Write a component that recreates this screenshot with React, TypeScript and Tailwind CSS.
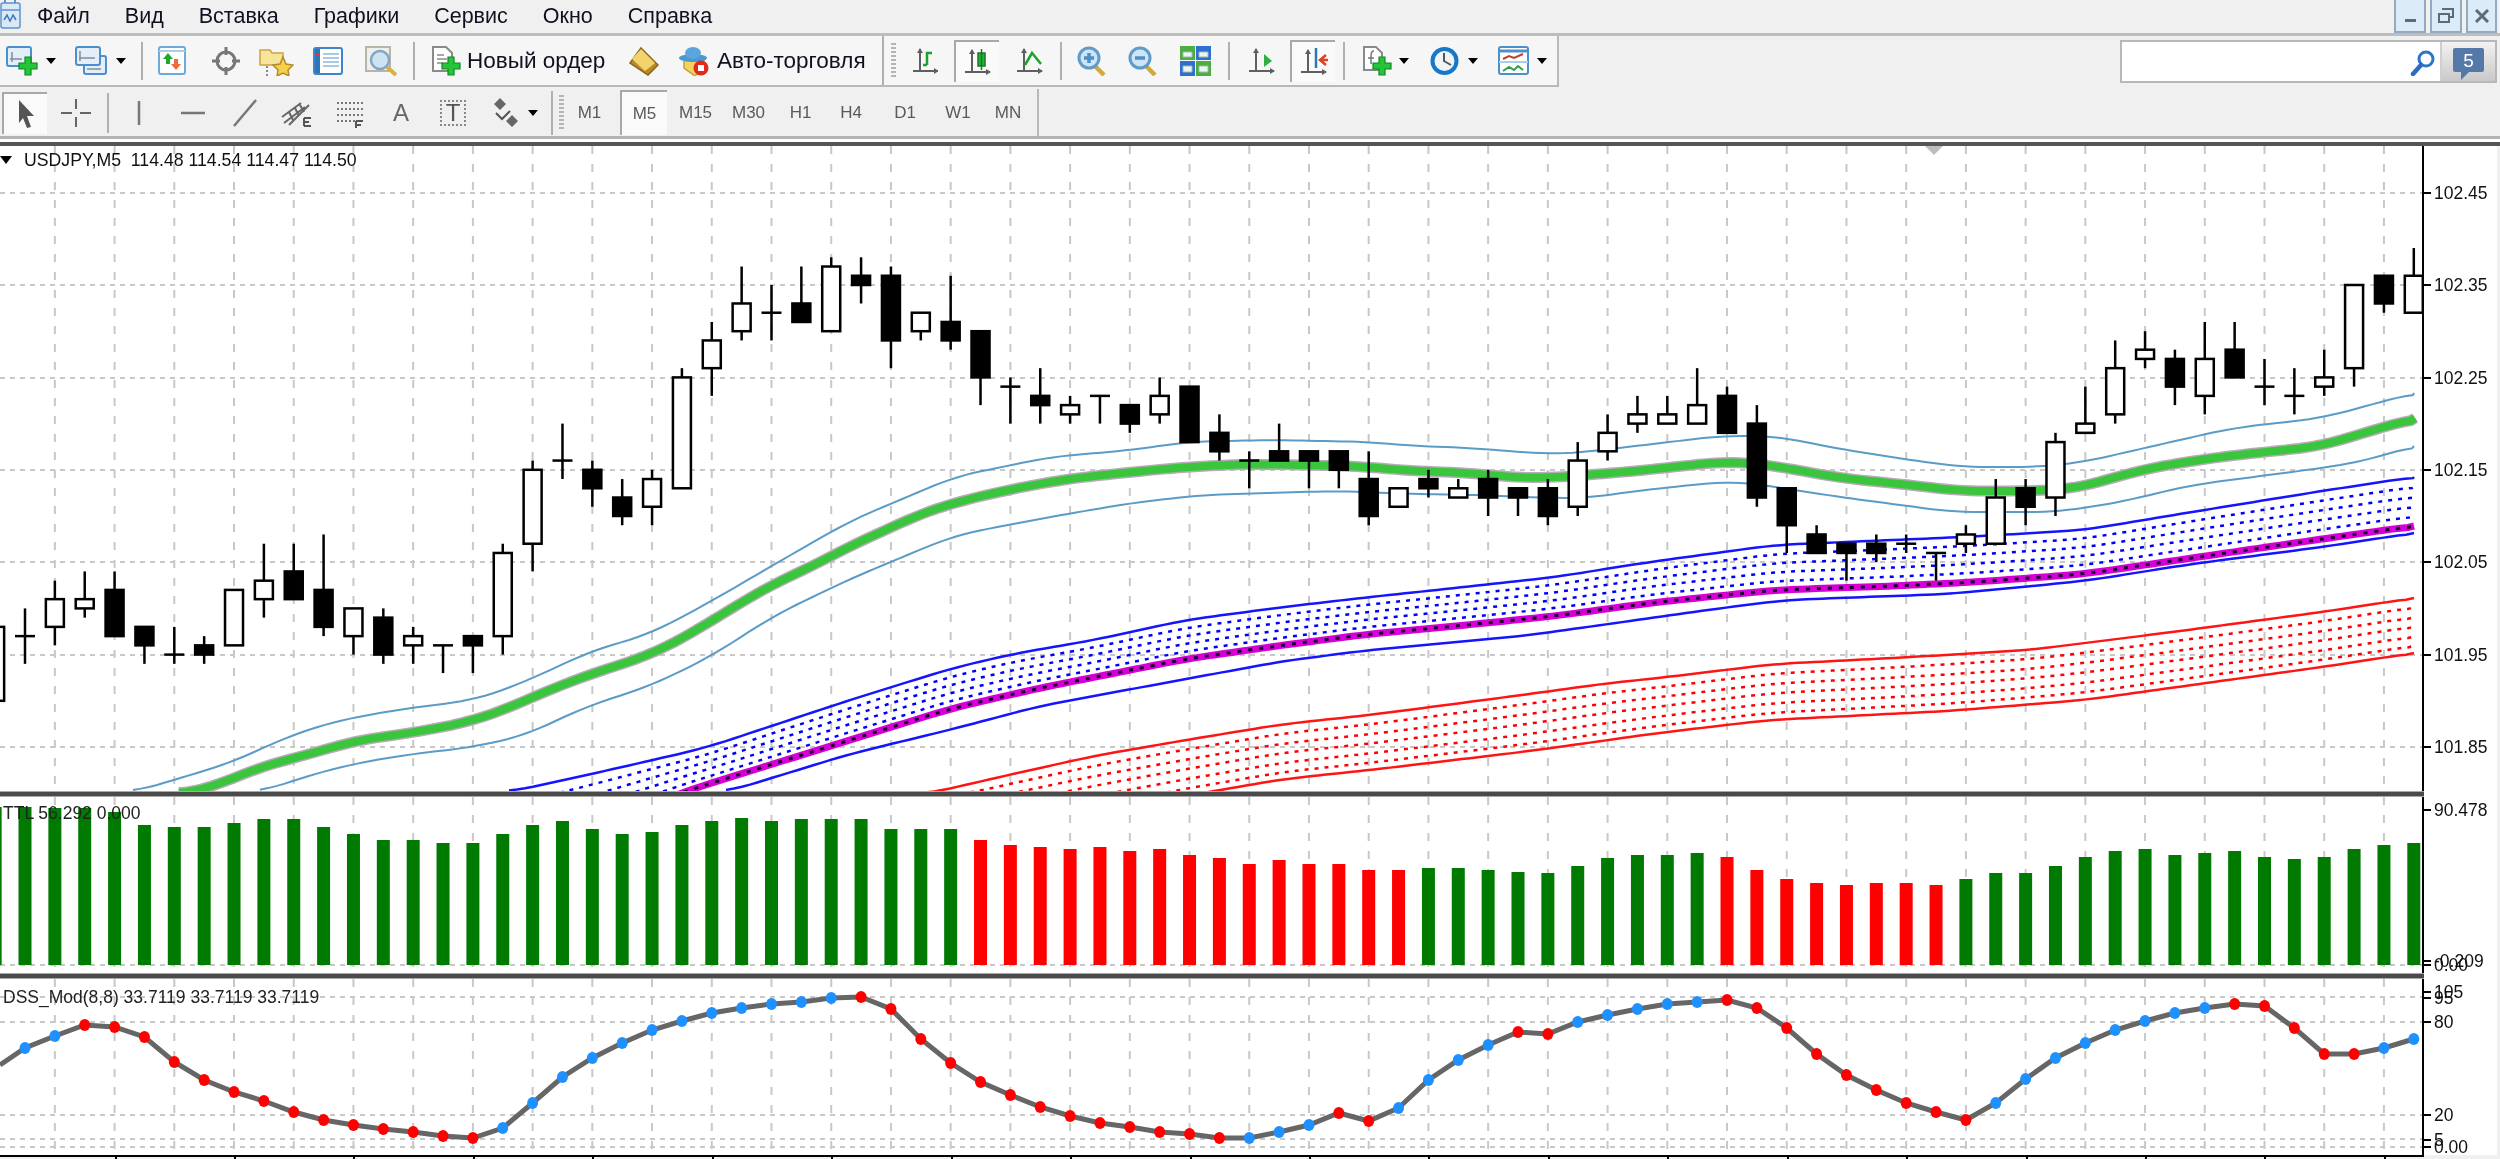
const candles: [number, number, number, number][] = [
  [-10, -2, -2, -10], [-3, -3, 0, -6], [-2, 1, 3, -4], [0, 1, 4, -1], [2, -3, 4, -3], [-2, -4, -2, -6], [-5, -5, -2, -6],
  [-4, -5, -3, -6], [-4, 2, 2, -4], [1, 3, 7, -1], [4, 1, 7, 1], [2, -2, 8, -3], [-3, 0, 0, -5], [-1, -5, 0, -6],
  [-4, -3, -2, -6], [-4, -4, -4, -7], [-3, -4, -3, -7], [-3, 6, 7, -5], [7, 15, 16, 4], [16, 16, 20, 14], [15, 13, 16, 11],
  [12, 10, 14, 9], [11, 14, 15, 9], [13, 25, 26, 13], [26, 29, 31, 23], [30, 33, 37, 29], [32, 32, 35, 29], [33, 31, 37, 31],
  [30, 37, 38, 30], [36, 35, 38, 33], [36, 29, 37, 26], [30, 32, 32, 29], [31, 29, 36, 28], [30, 25, 30, 22], [24, 24, 25, 20],
  [23, 22, 26, 20], [21, 22, 23, 20], [23, 23, 23, 20], [22, 20, 22, 19], [21, 23, 25, 20], [24, 18, 24, 18], [19, 17, 21, 16],
  [16, 16, 17, 13], [17, 16, 20, 16], [17, 16, 17, 13], [17, 15, 17, 13], [14, 10, 17, 9], [11, 13, 13, 11], [14, 13, 15, 12],
  [12, 13, 14, 12], [14, 12, 15, 10], [13, 12, 13, 10], [13, 10, 14, 9], [11, 16, 18, 10], [17, 19, 21, 16], [20, 21, 23, 19],
  [20, 21, 23, 20], [20, 22, 26, 20], [23, 19, 24, 19], [20, 12, 22, 11], [13, 9, 13, 6], [8, 6, 9, 6], [7, 6, 7, 3],
  [7, 6, 8, 5], [7, 7, 8, 6], [6, 6, 6, 3], [7, 8, 9, 6], [7, 12, 14, 7], [13, 11, 14, 9], [12, 18, 19, 10], [19, 20, 24, 19],
  [21, 26, 29, 20], [27, 28, 30, 26], [27, 24, 28, 22], [23, 27, 31, 21], [28, 25, 31, 25], [24, 24, 27, 22], [23, 23, 26, 21],
  [24, 25, 28, 23], [26, 35, 35, 24], [36, 33, 36, 32], [32, 36, 39, 32],
];

// tops of the histogram bars, first one is the cut off bar at the left edge
const barTops = [
  807, 807, 808, 808, 812, 825, 827, 827, 823, 819, 819, 827, 834, 840, 840, 843, 843, 834, 825, 821, 829, 834, 832, 825, 821, 818, 821,
  819, 819, 819, 829, 829, 829, 840, 845, 847, 849, 847, 851, 849, 855, 858, 864, 860, 864, 864, 870, 870, 868, 868, 870, 872, 873, 866,
  858, 855, 855, 853, 857, 870, 879, 883, 885, 883, 883, 885, 879, 873, 873, 866, 857, 851, 849, 855, 853, 851, 857, 859, 857, 849, 845, 843,
];

const dss = [
  1048, 1036, 1025, 1027, 1037, 1062, 1080, 1092, 1101, 1112, 1120, 1125, 1129, 1132, 1136, 1138, 1128, 1103, 1077, 1058, 1043, 1030, 1021,
  1013, 1008, 1004, 1002, 998, 997, 1009, 1039, 1063, 1082, 1095, 1107, 1116, 1123, 1127, 1132, 1134, 1138, 1138, 1132, 1125, 1113, 1121,
  1108, 1080, 1060, 1045, 1032, 1034, 1022, 1015, 1009, 1004, 1002, 1000, 1008, 1028, 1054, 1075, 1090, 1103, 1112, 1120, 1103, 1079, 1058,
  1043, 1030, 1021, 1013, 1008, 1004, 1006, 1028, 1054, 1054, 1048, 1039,
];
const dssRed: [number, number][] = [[2, 15], [28, 40], [44, 45], [50, 51], [57, 65], [74, 78]];

type Pt = [number, number];

const maMid: Pt[] = [
  [179, 794], [211, 788], [249, 771], [293, 758], [325, 750], [352, 741], [390, 736], [434, 729], [472, 721], [504, 710], [542, 693], [585, 676],
  [650, 655], [694, 632], [732, 608], [775, 583], [813, 566], [850, 546], [888, 529], [920, 514], [953, 503], [1007, 490], [1067, 479], [1132, 472],
  [1186, 467], [1251, 464], [1354, 466], [1414, 471], [1473, 473], [1506, 477], [1549, 478], [1587, 475], [1636, 471], [1720, 462], [1742, 462],
  [1775, 466], [1840, 478], [1910, 485], [1959, 491], [2029, 491], [2073, 489], [2149, 468], [2219, 457], [2322, 446], [2360, 434], [2415, 418],
];
const maUp: Pt[] = [
  [133, 792], [184, 777], [233, 762], [282, 739], [325, 724], [352, 718], [396, 710], [434, 705], [474, 700], [509, 688], [542, 674], [591, 651],
  [650, 634], [710, 602], [775, 564], [850, 521], [883, 507], [931, 487], [953, 477], [1007, 466], [1050, 457], [1132, 450], [1186, 442], [1267, 440],
  [1322, 441], [1370, 442], [1414, 446], [1473, 448], [1506, 451], [1549, 454], [1576, 453], [1636, 446], [1720, 436], [1775, 436], [1840, 449],
  [1910, 460], [1962, 467], [2040, 467], [2084, 462], [2149, 447], [2233, 428], [2322, 418], [2414, 393],
];
const maLow: Pt[] = [
  [260, 792], [304, 777], [352, 764], [412, 754], [474, 747], [526, 735], [585, 707], [650, 686], [710, 657], [775, 615], [850, 579], [893, 561],
  [953, 536], [1007, 525], [1067, 514], [1132, 503], [1202, 495], [1267, 493], [1338, 491], [1414, 494], [1479, 495], [1549, 498], [1587, 498],
  [1636, 491], [1720, 482], [1742, 482], [1840, 497], [1953, 512], [2056, 512], [2116, 503], [2192, 485], [2322, 468], [2360, 462], [2414, 446],
];
const blueUp: Pt[] = [
  [509, 792], [596, 773], [705, 748], [850, 700], [953, 668], [1013, 654], [1094, 640], [1186, 620], [1284, 607], [1370, 597], [1446, 589], [1555, 577],
  [1650, 562], [1775, 545], [1964, 537], [2084, 530], [2192, 512], [2322, 491], [2414, 477],
];
const blueMid: Pt[] = [
  [560, 840], [686, 791], [850, 740], [953, 708], [1040, 688], [1186, 659], [1284, 645], [1370, 634], [1446, 627], [1555, 616], [1650, 603], [1775, 590],
  [1894, 586], [1975, 582], [2084, 574], [2192, 558], [2322, 539], [2414, 526],
];
const blueLow: Pt[] = [
  [726, 792], [850, 754], [953, 729], [1040, 706], [1186, 679], [1284, 661], [1370, 650], [1522, 636], [1609, 624], [1700, 611], [1785, 600], [1948, 594],
  [2084, 581], [2192, 564], [2322, 547], [2414, 533],
];
const redUp: Pt[] = [
  [926, 794], [1013, 774], [1094, 756], [1186, 740], [1284, 724], [1370, 715], [1522, 695], [1609, 683], [1650, 679], [1775, 664], [1894, 658], [2029, 650],
  [2165, 633], [2322, 612], [2414, 598],
];
const redLow: Pt[] = [
  [926, 845], [1197, 794], [1284, 779], [1370, 770], [1522, 752], [1609, 740], [1650, 734], [1769, 720], [1948, 711], [2084, 700], [2192, 685], [2322, 667],
  [2414, 653],
];

const barX = (i: number) => 25 + i * 29.86;
const priceY = (p: number) => 285 + (35 - p) * 9.24;

function valueAt(line: Pt[], x: number) {
  for (let i = 1; i < line.length; i++) {
    if (x <= line[i][0]) {
      const [x0, y0] = line[i - 1];
      const [x1, y1] = line[i];
      return y0 + ((y1 - y0) * (x - x0)) / (x1 - x0);
    }
  }
  return line[line.length - 1][1];
}

// hand-read points are a bit angular, so resample and average them
function smooth(line: Pt[]) {
  const first = line[0][0];
  const last = line[line.length - 1][0];
  const out: Pt[] = [];
  for (let x = first; x < last; x += 8) {
    let sum = 0;
    for (let d = -24; d <= 24; d += 8) sum += valueAt(line, Math.min(last, Math.max(first, x + d)));
    out.push([x, sum / 7]);
  }
  out.push(line[line.length - 1]);
  return out;
}

const toPoints = (line: Pt[]) => line.map((p) => p.join(",")).join(" ");
const curve = (line: Pt[]) => toPoints(smooth(line));

function between(a: Pt[], b: Pt[], k: number, from: number) {
  const out: Pt[] = [];
  for (let x = from; x < 2414; x += 20) {
    const ya = valueAt(a, x);
    out.push([x, ya + (valueAt(b, x) - ya) * k]);
  }
  const ya = valueAt(a, 2414);
  out.push([2414, ya + (valueAt(b, 2414) - ya) * k]);
  return smooth(out);
}

const gridX = Array.from({ length: 41 }, (_, k) => barX(2 * k + 1));

function GridLines({ top, bottom, levels }: { top: number; bottom: number; levels: number[] }) {
  return (
    <g stroke="#c8c8c8" strokeWidth="2">
      {gridX.map((x) => (
        <line key={x} x1={x} x2={x} y1={top} y2={bottom} strokeDasharray="8 10" />
      ))}
      {levels.map((y) => (
        <line key={y} x1="0" x2="2422" y1={y} y2={y} strokeDasharray="5 5" />
      ))}
    </g>
  );
}

function MainChart() {
  return (
    <svg className="block h-[645px] w-[2422px] shrink-0" viewBox="0 146 2422 645">
      <GridLines top={146} bottom={791} levels={[193, 285, 378, 470, 562, 655, 747]} />
      <polygon points="1925,146 1943,146 1934,155" fill="#bdbdbd" />

      {/* moving average with its envelope */}
      <polyline points={curve(maMid)} fill="none" stroke="#b9a9b9" strokeWidth="11" />
      <polyline points={curve(maMid)} fill="none" stroke="#39c63c" strokeWidth="8" />
      <polyline points={curve(maUp)} fill="none" stroke="#5b9bc8" strokeWidth="2" />
      <polyline points={curve(maLow)} fill="none" stroke="#5b9bc8" strokeWidth="2" />

      {/* blue channel */}
      {[0.2, 0.4, 0.6, 0.8].map((k) => (
        <polyline key={k} points={toPoints(between(blueUp, blueMid, k, 540))} fill="none" stroke="#0000ff" strokeWidth="2.5" strokeDasharray="4 6" />
      ))}
      <polyline points={curve(blueUp)} fill="none" stroke="#1414ff" strokeWidth="2.5" />
      <polyline points={curve(blueLow)} fill="none" stroke="#1414ff" strokeWidth="2.5" />
      <polyline points={curve(blueMid)} fill="none" stroke="#d600d6" strokeWidth="7" />
      <polyline points={curve(blueMid)} fill="none" stroke="#10002a" strokeWidth="3" strokeDasharray="4 7" />

      {/* red channel */}
      {[0.17, 0.35, 0.52, 0.7, 0.87].map((k) => (
        <polyline key={k} points={toPoints(between(redUp, redLow, k, 960))} fill="none" stroke="#ff0000" strokeWidth="2.5" strokeDasharray="4 6" />
      ))}
      <polyline points={curve(redUp)} fill="none" stroke="#ff1414" strokeWidth="2.5" />
      <polyline points={curve(redLow)} fill="none" stroke="#ff1414" strokeWidth="2.5" />

      {candles.map(([o, c, h, l], i) => {
        const x = barX(i - 1);
        const top = priceY(Math.max(o, c));
        const bottom = priceY(Math.min(o, c));
        return (
          <g key={i}>
            <line x1={x} x2={x} y1={priceY(h)} y2={priceY(l)} stroke="#000" strokeWidth="2.5" />
            {o === c ? (
              <line x1={x - 10} x2={x + 10} y1={top} y2={top} stroke="#000" strokeWidth="2.5" />
            ) : (
              <rect x={x - 9} y={top} width="18" height={bottom - top} fill={c > o ? "#fff" : "#000"} stroke="#000" strokeWidth="2.5" />
            )}
          </g>
        );
      })}
    </svg>
  );
}

function HistogramChart() {
  return (
    <svg className="block h-[176px] w-[2422px] shrink-0" viewBox="0 797 2422 176">
      <GridLines top={797} bottom={973} levels={[965]} />
      {barTops.map((top, n) => {
        const i = n - 1;
        const red = (i >= 32 && i <= 46) || (i >= 57 && i <= 64);
        return <rect key={n} x={barX(i) - 6.5} y={top} width="13" height={965 - top} fill={red ? "#ff0000" : "#007a00"} />;
      })}
    </svg>
  );
}

function OscillatorChart() {
  const line: Pt[] = [[0, 1065], ...dss.map((y, i): Pt => [barX(i), y])];
  return (
    <svg className="block h-[176px] w-[2422px] shrink-0" viewBox="0 979 2422 176">
      <GridLines top={979} bottom={1155} levels={[997, 1022, 1115, 1139, 1147]} />
      <polyline points={toPoints(line)} fill="none" stroke="#666" strokeWidth="5" />
      {dss.map((y, i) => {
        const red = dssRed.some(([a, b]) => i >= a && i <= b);
        return <ellipse key={i} cx={barX(i)} cy={y} rx="5.5" ry="6" fill={red ? "#ff0000" : "#1e90ff"} />;
      })}
    </svg>
  );
}

function Axis({ top, height, labels }: { top: number; height: number; labels: [string, number][] }) {
  return (
    <div className="relative w-[75px] border-l-2 border-black" style={{ height }}>
      {labels.map(([text, y]) => (
        <div key={text} className="absolute left-0 flex items-center" style={{ top: y - top - 11 }}>
          <span className="h-[2px] w-[7px] bg-black" />
          <span className="ml-[3px] text-[17.5px] leading-[22px] text-[#111]">{text}</span>
        </div>
      ))}
    </div>
  );
}

function Drop({ className = "" }: { className?: string }) {
  return <span className={`block h-0 w-0 shrink-0 border-x-[5px] border-t-[6px] border-x-transparent border-t-black ${className}`} />;
}

function Sep({ className = "" }: { className?: string }) {
  return <span className={`block h-[38px] w-[2px] shrink-0 bg-[#b0b0b0] ${className}`} />;
}

function Grip({ className = "" }: { className?: string }) {
  return <span className={`block h-[36px] w-[5px] shrink-0 bg-[repeating-linear-gradient(to_bottom,#b4b4b4_0_2px,transparent_2px_4px)] ${className}`} />;
}

function Icon({ w, h = 30, className = "", children }: { w: number; h?: number; className?: string; children: React.ReactNode }) {
  return (
    <svg className={`block shrink-0 ${className}`} width={w} height={h} viewBox={`0 0 ${w} ${h}`} fill="none">
      {children}
    </svg>
  );
}

function Plus({ x, y, s = 1 }: { x: number; y: number; s?: number }) {
  return (
    <path
      transform={`translate(${x} ${y}) scale(${s})`}
      d="M-3-9H3V-3H9V3H3V9H-3V3H-9V-3H-3Z"
      fill="#25c53a"
      stroke="#0d8a20"
      strokeWidth="1.2"
    />
  );
}

function Axes({ c = "#5f5f5f" }: { c?: string }) {
  return (
    <g stroke={c} strokeWidth="2">
      <path d="M8 3V26M1 25H26" />
      <path d="M5 7L8 2L11 7ZM22 22L27 25L22 28Z" fill={c} stroke="none" />
    </g>
  );
}

function Mag({ kind }: { kind: "+" | "-" }) {
  return (
    <Icon w={31}>
      <path d="M18 19L28 29" stroke="#d2a93a" strokeWidth="4.5" />
      <circle cx="13" cy="12" r="10" fill="#cfe5f6" stroke="#5e9ccb" strokeWidth="3" />
      {kind === "+" && <path d="M13 7V17" stroke="#4d8fc4" strokeWidth="3.5" />}
      <path d="M8 12H18" stroke="#4d8fc4" strokeWidth="3.5" />
    </Icon>
  );
}

function Pressed({ className = "", children }: { className?: string; children: React.ReactNode }) {
  return (
    <div className={`flex h-[42px] w-[45px] shrink-0 items-center justify-center border-t-2 border-l-2 border-[#a8a8a8] bg-[#fafafa] ${className}`}>{children}</div>
  );
}

function TopBar() {
  return (
    <div className="flex h-[36px] items-start border-b-[3px] border-[#bdbdbd] bg-[#f0f0f0]">
      <Icon w={22} h={30}>
        <rect x="1" y="3" width="19" height="25" rx="2" fill="#dbe9f7" stroke="#5b93cf" strokeWidth="1.5" />
        <path d="M1 10H20" stroke="#5b93cf" strokeWidth="1.5" />
        <path d="M5 3V0M15 3V0" stroke="#5b93cf" strokeWidth="2" />
        <path d="M4 20L7 15L10 21L13 15L16 20" stroke="#3a78c0" strokeWidth="1.5" />
      </Icon>
      <nav className="ml-[15px] flex h-[33px] items-center gap-[35px] text-[21.5px] text-[#101020]">
        {["Файл", "Вид", "Вставка", "Графики", "Сервис", "Окно", "Справка"].map((m) => (
          <span key={m}>{m}</span>
        ))}
      </nav>
      <div className="ml-auto mr-[3px] flex gap-[4px]">
        <div className="flex h-[33px] w-[32px] items-end justify-center border-x-2 border-b-2 border-[#93abc1] bg-[#dcebf8] pb-[9px]">
          <span className="block h-[3px] w-[11px] bg-[#5c6b7a]" />
        </div>
        <div className="flex h-[33px] w-[32px] items-center justify-center border-x-2 border-b-2 border-[#93abc1] bg-[#dcebf8]">
          <Icon w={16} h={16}>
            <path d="M4 1H15V9H12M1 6H11V14H1Z" stroke="#5c6b7a" strokeWidth="2" />
          </Icon>
        </div>
        <div className="flex h-[33px] w-[31px] items-center justify-center border-x-2 border-b-2 border-[#93abc1] bg-[#dcebf8]">
          <Icon w={14} h={14}>
            <path d="M1 1L13 13M13 1L1 13" stroke="#5c6b7a" strokeWidth="3" />
          </Icon>
        </div>
      </div>
    </div>
  );
}

function MainToolbar() {
  return (
    <div className="flex h-[53px] items-start">
      <div className="flex h-[51px] w-[1559px] shrink-0 items-center border-r-2 border-b-2 border-[#b9b9b9] bg-[#f6f6f6] pl-[6px] text-[22.5px] text-[#101020]">
        <Icon w={32}>
          <rect x="1" y="1" width="24" height="19" rx="2" fill="#e3eef9" stroke="#4c8fcb" strokeWidth="2" />
          <path d="M6 6V16M4 13H16" stroke="#7f8f9f" strokeWidth="1.5" />
          <Plus x={22} y={20} />
        </Icon>
        <Drop className="ml-[8px]" />
        <Icon w={32} className="ml-[19px]">
          <rect x="9" y="10" width="22" height="18" rx="2" fill="#e3eef9" stroke="#4c8fcb" strokeWidth="2" />
          <rect x="1" y="1" width="24" height="18" rx="2" fill="#e3eef9" stroke="#4c8fcb" strokeWidth="2" />
          <path d="M5 5V15M4 12H20M12 23H26" stroke="#7f8f9f" strokeWidth="1.5" />
        </Icon>
        <Drop className="ml-[9px]" />
        <Sep className="ml-[15px]" />
        <Icon w={28} className="ml-[15px]">
          <rect x="1" y="1" width="26" height="27" rx="2" fill="#fff" stroke="#6ea9dc" strokeWidth="2" />
          <path d="M1 5H27" stroke="#a9cdec" strokeWidth="2" />
          <path d="M10 7L15 13H12V18H8V13H5Z" fill="#1da82e" />
          <path d="M18 24L13 18H16V13H20V18H23Z" fill="#ee6a3a" />
        </Icon>
        <Icon w={28} className="ml-[26px]">
          <circle cx="14" cy="15" r="9" stroke="#777" strokeWidth="3" />
          <path d="M14 1V9M14 21V29M0 15H8M20 15H28" stroke="#777" strokeWidth="3" />
        </Icon>
        <Icon w={35} className="ml-[19px]">
          <path d="M1 4H11L13 7H24V19H1Z" fill="#f7e39a" stroke="#c9a444" strokeWidth="1.5" />
          <path d="M8 20V30" stroke="#888" strokeWidth="2" strokeDasharray="2 2" />
          <path d="M24 11L27 18L34 19L29 24L30 30L24 27L18 30L19 24L14 19L21 18Z" fill="#f5d14a" stroke="#b48a2a" strokeWidth="1.5" />
        </Icon>
        <Icon w={30} className="ml-[19px]">
          <rect x="1" y="2" width="28" height="26" rx="2" fill="#fff" stroke="#3f86c9" strokeWidth="2" />
          <rect x="2" y="3" width="5" height="24" fill="#2f75bb" />
          <path d="M10 8H26M10 12H26M10 16H26M10 20H26" stroke="#8fb8df" strokeWidth="1.5" />
          <path d="M3 8H6" stroke="#e33" strokeWidth="2" />
        </Icon>
        <Icon w={33} className="ml-[22px]">
          <rect x="1" y="1" width="24" height="24" fill="#f0efe8" stroke="#b8b5a8" strokeWidth="2" />
          <path d="M22 21L31 29" stroke="#d9b13e" strokeWidth="4" />
          <circle cx="15" cy="14" r="9" fill="#cfe2f2" stroke="#7ea7c9" strokeWidth="2.5" />
        </Icon>
        <Sep className="ml-[15px]" />
        <Icon w={30} className="ml-[16px]">
          <path d="M2 1H15L21 7V25H2Z" fill="#fff" stroke="#8a8a8a" strokeWidth="2" />
          <path d="M6 9H13M6 13H16M6 17H12" stroke="#8a8a8a" strokeWidth="1.5" />
          <Plus x={20} y={20} />
        </Icon>
        <span className="ml-[6px] w-[136px] shrink-0 whitespace-nowrap">Новый ордер</span>
        <Icon w={32} className="ml-[24px]">
          <path d="M14 2L31 19L21 29L3 17Z" fill="#b98a2a" stroke="#8b6318" strokeWidth="1.5" />
          <path d="M14 3L28 17L18 25L5 13Z" fill="#f1d46c" />
        </Icon>
        <Icon w={32} className="ml-[19px]">
          <path d="M6 14H26V22L17 30L6 22Z" fill="#f2d35c" stroke="#c79f32" strokeWidth="1.5" />
          <ellipse cx="15" cy="12" rx="14" ry="4" fill="#4a98cf" />
          <ellipse cx="15" cy="7" rx="8" ry="6" fill="#5aa6dc" />
          <circle cx="23" cy="22" r="7.5" fill="#e02a1c" />
          <rect x="20" y="19" width="6" height="6" fill="#fff" />
        </Icon>
        <span className="ml-[7px] w-[150px] shrink-0 whitespace-nowrap">Авто-торговля</span>
        <Sep className="ml-[15px] h-[49px]" />
        <Grip className="ml-[7px]" />
        <Icon w={26} className="ml-[16px]">
          <Axes />
          <path d="M15 19V7H20" stroke="#1ea22e" strokeWidth="2.5" />
          <path d="M11 19H15" stroke="#1ea22e" strokeWidth="2.5" />
        </Icon>
        <Pressed className="ml-[16px]">
          <Icon w={27}>
            <Axes />
            <rect x="14" y="6" width="7" height="13" fill="#23b33a" stroke="#147a22" strokeWidth="1.5" />
            <path d="M17.5 2V23" stroke="#147a22" strokeWidth="1.5" />
          </Icon>
        </Pressed>
        <Icon w={27} className="ml-[17px]">
          <Axes />
          <path d="M9 19L16 7L25 18" stroke="#1ea22e" strokeWidth="2.5" />
        </Icon>
        <Sep className="ml-[17px]" />
        <div className="ml-[14px]">
          <Mag kind="+" />
        </div>
        <div className="ml-[20px]">
          <Mag kind="-" />
        </div>
        <Icon w={31} className="ml-[22px]">
          <rect x="0" y="0" width="15" height="14" fill="#4dae3f" />
          <rect x="16" y="0" width="15" height="14" fill="#2e6fd0" />
          <rect x="0" y="15" width="15" height="15" fill="#2e6fd0" />
          <rect x="16" y="15" width="15" height="15" fill="#4dae3f" />
          <path d="M3 6H12V11H3ZM19 6H28V11H19ZM3 20H12V26H3ZM19 20H28V26H19Z" fill="#eef4f0" stroke="#9bb" />
        </Icon>
        <Sep className="ml-[17px]" />
        <Icon w={27} className="ml-[18px]">
          <Axes />
          <path d="M16 8L24 15L16 21Z" fill="#2fae45" />
        </Icon>
        <Pressed className="ml-[15px]">
          <Icon w={28}>
            <Axes />
            <path d="M16 1V21" stroke="#2b78b8" strokeWidth="2.5" />
            <path d="M28 13H22M26 8L20 13L26 18" stroke="#e2401c" strokeWidth="2.5" />
          </Icon>
        </Pressed>
        <Sep className="ml-[8px]" />
        <Icon w={30} className="ml-[17px]">
          <path d="M2 1H14L20 7V24H2Z" fill="#fff" stroke="#8a8a8a" strokeWidth="2" />
          <path d="M12 5C9 5 9 8 9 10V18M6 12H12" stroke="#777" strokeWidth="1.5" />
          <Plus x={20} y={20} />
        </Icon>
        <Drop className="ml-[7px]" />
        <Icon w={31} className="ml-[20px]">
          <circle cx="15.5" cy="15" r="14" fill="#1578c8" />
          <circle cx="15.5" cy="15" r="10" fill="#eef4f8" />
          <path d="M15 7V15L22 19" stroke="#555" strokeWidth="2" />
        </Icon>
        <Drop className="ml-[8px]" />
        <Icon w={31} className="ml-[20px]">
          <rect x="1" y="1" width="29" height="27" rx="2" fill="#fff" stroke="#4c8fcb" strokeWidth="2" />
          <path d="M1 5H30" stroke="#4c8fcb" strokeWidth="3" />
          <path d="M1 16H30" stroke="#a9cdec" strokeWidth="2" />
          <path d="M5 13L11 10L16 12L25 8" stroke="#b8452c" strokeWidth="2" />
          <path d="M5 25L11 21L16 24L20 20L25 24" stroke="#2fa04a" strokeWidth="2" />
        </Icon>
        <Drop className="ml-[8px]" />
      </div>
      <div className="ml-[561px] mt-[4px] flex h-[43px] w-[377px] shrink-0 border-2 border-[#b8b8b8] bg-white">
        <div className="flex flex-1 items-center justify-end pr-[5px]">
          <Icon w={25} h={28}>
            <circle cx="16" cy="11" r="7" stroke="#2f74c8" strokeWidth="3" />
            <path d="M11 17L3 26" stroke="#2f6cc0" strokeWidth="4.5" strokeLinecap="round" />
          </Icon>
        </div>
        <div className="relative flex w-[55px] justify-center border-l-2 border-[#cfcfcf] bg-[linear-gradient(#f2f2f2,#c9c9c9)]">
          <div className="mt-[6px] flex h-[24px] w-[31px] items-center justify-center rounded-[2px] bg-[#5478a8] text-[19px] leading-none text-white">5</div>
          <span className="absolute left-[19px] top-[30px] h-0 w-0 border-t-[8px] border-r-[8px] border-t-[#5478a8] border-r-transparent" />
        </div>
      </div>
    </div>
  );
}

function Timeframe({ label, className }: { label: string; className: string }) {
  return <span className={`shrink-0 text-center ${className}`}>{label}</span>;
}

function DrawToolbar() {
  return (
    <div className="flex h-[50px] border-b-[3px] border-[#b4b4b4]">
      <div className="flex h-[47px] w-[1039px] shrink-0 items-center border-r-2 border-[#b9b9b9] pl-[2px] text-[17px] text-[#5a5a5a]">
        <Pressed>
          <Icon w={20} h={30}>
            <path d="M3 1L18 17H11L15 28L11 29L7 19L3 24Z" fill="#555" />
          </Icon>
        </Pressed>
        <Icon w={30} className="ml-[14px]">
          <path d="M15 1V11M15 19V29M0 15H11M19 15H30" stroke="#666" strokeWidth="2" />
        </Icon>
        <Sep className="ml-[16px] h-[40px]" />
        <Icon w={24} className="ml-[18px]">
          <path d="M12 3V27" stroke="#777" strokeWidth="2.5" />
        </Icon>
        <Icon w={24} className="ml-[30px]">
          <path d="M0 15H24" stroke="#777" strokeWidth="2.5" />
        </Icon>
        <Icon w={24} className="ml-[28px]">
          <path d="M1 28L23 2" stroke="#777" strokeWidth="2.5" />
        </Icon>
        <Icon w={32} className="ml-[24px]">
          <path d="M1 19L20 5M3 25L24 9M8 27L28 7M8 14L12 22M14 10L18 18M19 7L23 14" stroke="#666" strokeWidth="2" />
          <path d="M23 20H30M23 24H28M23 28H30M23 20V28" stroke="#555" strokeWidth="2" />
        </Icon>
        <Icon w={28} className="ml-[23px]">
          <path d="M1 5H27M1 11H27M1 17H27M1 23H21" stroke="#777" strokeWidth="2" strokeDasharray="2 2" />
          <path d="M20 23H27M20 27H25M20 23V30" stroke="#555" strokeWidth="2" />
        </Icon>
        <span className="ml-[29px] w-[16px] shrink-0 text-center text-[24px] leading-none text-[#666]">A</span>
        <div className="ml-[31px] flex h-[26px] w-[26px] shrink-0 items-center justify-center border-2 border-dotted border-[#888] text-[24px] leading-none text-[#555]">T</div>
        <Icon w={27} className="ml-[26px]">
          <path d="M8 0L14 6L8 12L2 6ZM20 17L26 23L20 29L14 23Z" fill="#666" />
          <path d="M4 15L10 21L18 13" stroke="#555" strokeWidth="2" />
        </Icon>
        <Drop className="ml-[9px]" />
        <Sep className="ml-[13px] h-[44px]" />
        <Grip className="ml-[6px]" />
        <Timeframe label="M1" className="ml-[13px] w-[25px]" />
        <Pressed className="ml-[18px] w-[47px] h-[45px]">M5</Pressed>
        <Timeframe label="M15" className="ml-[12px] w-[33px]" />
        <Timeframe label="M30" className="ml-[20px] w-[33px]" />
        <Timeframe label="H1" className="ml-[24px] w-[23px]" />
        <Timeframe label="H4" className="ml-[27px] w-[24px]" />
        <Timeframe label="D1" className="ml-[31px] w-[22px]" />
        <Timeframe label="W1" className="ml-[28px] w-[28px]" />
        <Timeframe label="MN" className="ml-[22px] w-[28px]" />
      </div>
    </div>
  );
}

function PaneSplit() {
  return <div className="h-[6px] w-[2424px] border-y-[1.5px] border-[#a8a8a8] bg-[#4a4a4a]" />;
}

export default function App() {
  return (
    <div className="flex h-[1159px] w-[2500px] flex-col overflow-hidden bg-[#f0f0f0] font-['Liberation_Sans',Arial,sans-serif] blur-[0.5px]">
      <TopBar />
      <MainToolbar />
      <DrawToolbar />
      <div className="h-[3px] bg-white" />
      <div className="h-[4px] bg-[#555]" />

      <div className="mr-[3px] bg-white">
        <div className="relative flex">
          <MainChart />
          <Axis
            top={146}
            height={645}
            labels={[["102.45", 193], ["102.35", 285], ["102.25", 378], ["102.15", 470], ["102.05", 562], ["101.95", 655], ["101.85", 747]]}
          />
          <div className="absolute left-0 top-[3px] flex items-center text-[17.7px] leading-[22px] text-[#111]">
            <span className="h-0 w-0 border-x-[6px] border-t-[8px] border-x-transparent border-t-black" />
            <span className="ml-[12px] whitespace-pre">USDJPY,M5  114.48 114.54 114.47 114.50</span>
          </div>
        </div>
        <PaneSplit />
        <div className="relative flex">
          <HistogramChart />
          <Axis top={797} height={176} labels={[["90.478", 810], ["-0.209", 961], ["0.00", 965]]} />
          <span className="absolute left-[3px] top-[5px] text-[17.5px] leading-[22px] text-[#222]">TTL 56.292 0.000</span>
        </div>
        <PaneSplit />
        <div className="relative flex">
          <OscillatorChart />
          <Axis
            top={979}
            height={176}
            labels={[["105", 992], ["95", 998], ["80", 1022], ["20", 1115], ["5", 1140], ["0.00", 1147]]}
          />
          <span className="absolute left-[3px] top-[7px] whitespace-nowrap text-[17.5px] leading-[22px] text-[#222]">DSS_Mod(8,8) 33.7119 33.7119 33.7119</span>
        </div>
      </div>

      <div className="h-[2px] w-[2424px] bg-black" />
      <div className="flex h-[2px] w-[2424px]">
        {gridX.filter((_, k) => k % 2 === 1).map((x) => (
          <span key={x} className="h-[2px] w-[2px] shrink-0 bg-black" style={{ marginLeft: x === gridX[1] ? x : 117.44 }} />
        ))}
      </div>
    </div>
  );
}
